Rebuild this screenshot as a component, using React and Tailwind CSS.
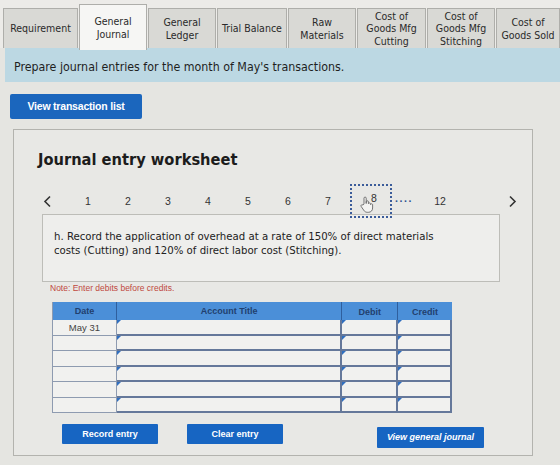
import React from 'react';

const TABS = [
    { label: ['Requirement'], w: 'w-[75px]' },
    { label: ['General', 'Journal'], w: 'w-[68px]', active: true },
    { label: ['General', 'Ledger'], w: 'w-[68px]' },
    { label: ['Trial Balance'], w: 'w-[70px]' },
    { label: ['Raw', 'Materials'], w: 'w-[68px]' },
    { label: ['Cost of', 'Goods Mfg', 'Cutting'], w: 'w-[69px]' },
    { label: ['Cost of', 'Goods Mfg', 'Stitching'], w: 'w-[68px]' },
    { label: ['Cost of', 'Goods Sold'], w: 'w-[64px]' },
];

const PAGES = ['1', '2', '3', '4', '5', '6', '7'];

function Caret() {
    // small blue marker in the corner of a dropdown cell
    return <span className="absolute left-0 top-0 w-0 h-0 border-t-[4px] border-t-[#2f6fc0] border-r-[4px] border-r-transparent" />;
}

function Chevron({ dir }) {
    return (
        <svg width="9" height="13" viewBox="0 0 9 13" fill="none" stroke="#333" strokeWidth="1.6">
            {dir === 'left' ? <path d="M7 1.5 2 6.5l5 5" /> : <path d="M2 1.5l5 5-5 5" />}
        </svg>
    );
}

function EntryRow({ date }) {
    return (
        <div className="flex h-[15.5px]">
            <div className="w-[64px] border-r border-b border-[#8e9bb0] text-[9.5px] text-[#444] font-['Liberation_Sans'] flex items-center justify-center">
                {date}
            </div>
            <div className="relative w-[226px] border-r-2 border-b-2 border-[#65789a]"><Caret /></div>
            <div className="relative w-[56px] border-r-2 border-b-2 border-[#65789a]"><Caret /></div>
            <div className="relative w-[54px] border-r-2 border-b-2 border-[#65789a]"><Caret /></div>
        </div>
    );
}

export default function App() {
    return (
        <div className="w-[560px] h-[465px] overflow-hidden bg-[#e5e5e1] font-['DejaVu_Sans_Condensed','DejaVu_Sans',sans-serif] text-[#222]">
            {/* tab strip */}
            <div className="h-[48px] bg-[#ecebe8] flex items-end pl-[3px]">
                {TABS.map((tab, i) => (
                    <div
                        key={i}
                        className={`${tab.w} ${tab.active ? 'h-[46px] bg-[#f6f6f4] -mb-[2px]' : 'h-[40px] bg-[#d9d9d5]'} border border-[#aeaeaa] border-b-0 mr-[1px] flex flex-col items-center justify-center text-[10.5px] leading-[12.5px] text-[#2a2a2a] text-center shrink-0`}
                    >
                        {tab.label.map(l => <div key={l}>{l}</div>)}
                    </div>
                ))}
            </div>

            <div className="ml-[5px] h-[34px] bg-[#bcd8e3] flex items-center pl-[9px] pt-[4px] text-[12.3px] text-[#1f1f1f]">
                Prepare journal entries for the month of May's transactions.
            </div>

            <div className="pl-[10px] pt-[11px]">
                <button className="w-[132px] h-[25px] bg-[#1b66bd] rounded-[2px] text-white text-[10.5px] font-bold font-['Liberation_Sans'] tracking-[-0.2px]">
                    View transaction list
                </button>
            </div>

            {/* worksheet panel */}
            <div className="ml-[13px] mt-[10px] w-[520px] h-[327px] border border-[#b3b3ae] bg-[#e8e8e5] pl-[24px] pt-[20px]">
                <div className="text-[16.3px] font-bold text-[#1c1c1c] leading-[20px]">Journal entry worksheet</div>

                <div className="flex items-center mt-[14px] h-[34px] text-[10.5px] text-[#333] font-['Liberation_Sans']">
                    <div className="w-[18px] flex justify-center"><Chevron dir="left" /></div>
                    <div className="flex ml-[12px]">
                        {PAGES.map(p => (
                            <div key={p} className="w-[40px] text-center">{p}</div>
                        ))}
                    </div>
                    <div className="ml-[2px] w-[42px] h-[34px] border-2 border-dotted border-[#3b5c9a] flex items-center justify-center relative">
                        <span className="-mt-[6px] ml-[6px]">8</span>
                        <svg className="absolute left-[8px] top-[10px]" width="14" height="17" viewBox="0 0 14 17" fill="#f4f4f2" stroke="#666" strokeWidth="0.9">
                            <path d="M4 8V2.2a1.1 1.1 0 0 1 2.2 0V7.5l0-1.6a1.1 1.1 0 0 1 2.2 0v1.8a1.1 1.1 0 0 1 2.1 0v.9a1.1 1.1 0 0 1 2.1 0V12c0 2.5-1.6 4.3-4.2 4.3H7.3c-1.6 0-2.6-.7-3.5-2L1.2 10.5a1.1 1.1 0 0 1 1.8-1.3z" />
                        </svg>
                    </div>
                    <div className="ml-[3px] w-[20px] text-[#2d4f8f] font-bold tracking-[1px] leading-none">····</div>
                    <div className="w-[50px] text-center">12</div>
                    <div className="ml-[40px] w-[14px] flex justify-center"><Chevron dir="right" /></div>
                </div>

                <div className="ml-[4px] mt-[-4px] w-[458px] h-[68px] border border-[#bdbdb8] bg-[#eeeeec] pl-[11px] pt-[15px] text-[11.3px] leading-[14px] text-[#222]">
                    <div>h. Record the application of overhead at a rate of 150% of direct materials</div>
                    <div>costs (Cutting) and 120% of direct labor cost (Stitching).</div>
                </div>

                <div className="ml-[12px] mt-[1px] text-[8.5px] leading-[11px] text-[#c0483e] font-['Liberation_Sans']">Note: Enter debits before credits.</div>

                {/* entry grid */}
                <div className="ml-[14px] mt-[8px] w-[400px] bg-[#f1f1ef] border-l border-[#8e9bb0]">
                    <div className="flex h-[18px] bg-[#4b8fd8] text-[9px] font-bold text-[#22406e] font-['Liberation_Sans']">
                        <div className="w-[64px] flex items-center justify-center border-r border-[#2f5f9e]">Date</div>
                        <div className="w-[226px] flex items-center justify-center border-r border-[#2f5f9e]">Account Title</div>
                        <div className="w-[56px] flex items-end justify-center pb-[1px] border-r border-[#2f5f9e]">Debit</div>
                        <div className="w-[54px] flex items-end justify-center pb-[1px]">Credit</div>
                    </div>
                    <EntryRow date="May 31" />
                    <EntryRow />
                    <EntryRow />
                    <EntryRow />
                    <EntryRow />
                    <EntryRow />
                </div>

                <div className="flex items-start mt-[11px] ml-[24px] text-white text-[9px] font-bold font-['Liberation_Sans']">
                    <button className="w-[96px] h-[20px] bg-[#1765c2] rounded-[1px]">Record entry</button>
                    <button className="ml-[29px] w-[96px] h-[20px] bg-[#1765c2] rounded-[1px]">Clear entry</button>
                    <button className="ml-[94px] mt-[3px] w-[107px] h-[21px] bg-[#1765c2] rounded-[1px] italic">View general journal</button>
                </div>
            </div>
        </div>
    );
}
